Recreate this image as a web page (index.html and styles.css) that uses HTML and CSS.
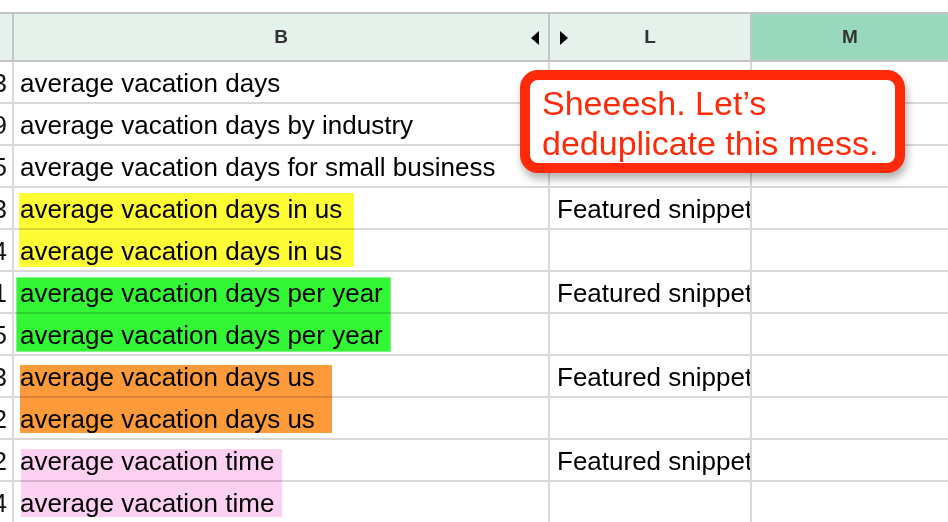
FILE: index.html
```html
<!DOCTYPE html>
<html>
<head>
<meta charset="utf-8">
<link rel="stylesheet" href="styles.css">
</head>
<body>
<div class="sheet">
  <div class="head">
    <div class="hc corner"></div>
    <div class="hc">B<span class="arrow arrow-left"></span></div>
    <div class="hc">L<span class="arrow arrow-right"></span></div>
    <div class="hc sel">M</div>
  </div>
  <div class="grid">
    <div class="row"><div class="num">3</div><div class="cell">average vacation days</div><div class="cell"></div><div class="cell"></div></div>
    <div class="row"><div class="num">9</div><div class="cell">average vacation days by industry</div><div class="cell"></div><div class="cell"></div></div>
    <div class="row"><div class="num">5</div><div class="cell">average vacation days for small business</div><div class="cell"></div><div class="cell"></div></div>
    <div class="row"><div class="num">3</div><div class="cell">average vacation days in us</div><div class="cell">Featured snippet</div><div class="cell"></div></div>
    <div class="row"><div class="num">4</div><div class="cell">average vacation days in us</div><div class="cell"></div><div class="cell"></div></div>
    <div class="row"><div class="num">1</div><div class="cell">average vacation days per year</div><div class="cell">Featured snippet</div><div class="cell"></div></div>
    <div class="row"><div class="num">5</div><div class="cell">average vacation days per year</div><div class="cell"></div><div class="cell"></div></div>
    <div class="row"><div class="num">3</div><div class="cell">average vacation days us</div><div class="cell">Featured snippet</div><div class="cell"></div></div>
    <div class="row"><div class="num">2</div><div class="cell">average vacation days us</div><div class="cell"></div><div class="cell"></div></div>
    <div class="row"><div class="num">2</div><div class="cell">average vacation time</div><div class="cell">Featured snippet</div><div class="cell"></div></div>
    <div class="row"><div class="num">4</div><div class="cell">average vacation time</div><div class="cell"></div><div class="cell"></div></div>

    <div class="mark mark-yellow"></div>
    <div class="mark mark-green"></div>
    <div class="mark mark-orange"></div>
    <div class="mark mark-pink"></div>

    <div class="callout">Sheeesh. Let’s<br>deduplicate this mess.</div>
  </div>
</div>
</body>
</html>
```

FILE: styles.css
```css
html, body {
  margin: 0;
  padding: 0;
  background: #ffffff;
  overflow: hidden;
}

.sheet {
  padding-top: 12px;
  font-family: "Liberation Sans", Arial, sans-serif;
  width: 948px;
}

.head {
  display: grid;
  grid-template-columns: 14px 536px 202px 196px;
  height: 50px;
  border-top: 2px solid #c4c4c4;
  border-bottom: 2px solid #c4c4c4;
  box-sizing: border-box;
}

.hc {
  position: relative;
  background: #e4f2eb;
  border-right: 2px solid #c4c4c4;
  box-sizing: border-box;
  text-align: center;
  font-weight: bold;
  font-size: 19px;
  line-height: 46px;
  color: #333333;
}

.hc.sel {
  background: #9ad8bd;
  border-right: none;
}

.arrow {
  position: absolute;
  top: 17px;
  width: 0;
  height: 0;
  border-top: 7px solid transparent;
  border-bottom: 7px solid transparent;
}

.arrow-left {
  right: 9px;
  border-right: 8px solid #000000;
}

.arrow-right {
  left: 10px;
  border-left: 8px solid #000000;
}

.grid {
  position: relative;
}

.row {
  display: grid;
  grid-template-columns: 14px 536px 202px 196px;
  height: 42px;
}

.num,
.cell {
  border-right: 2px solid #d9d9d9;
  border-bottom: 2px solid #d9d9d9;
  box-sizing: border-box;
  padding-top: 2px;
  font-size: 26px;
  line-height: 38px;
  color: #000000;
  white-space: nowrap;
  overflow: hidden;
}

.num {
  display: flex;
  justify-content: flex-end;
  padding-right: 5px;
  color: #111111;
}

.cell {
  padding-left: 6px;
}

.row .cell:nth-child(3) {
  padding-left: 7px;
}

.row .cell:last-child {
  border-right: none;
}

.mark {
  position: absolute;
  mix-blend-mode: multiply;
  pointer-events: none;
}

.mark-yellow {
  left: 19px;
  top: 131px;
  width: 335px;
  height: 74px;
  background: #fdfc35;
}

.mark-green {
  left: 16px;
  top: 215px;
  width: 375px;
  height: 75px;
  background: #33f734;
  border: 1px solid #86f386;
  box-sizing: border-box;
}

.mark-orange {
  left: 20px;
  top: 303px;
  width: 312px;
  height: 68px;
  background: #fd9a3a;
}

.mark-pink {
  left: 21px;
  top: 387px;
  width: 261px;
  height: 68px;
  background: #fbd0f0;
}

.callout {
  position: absolute;
  left: 520px;
  top: 8px;
  width: 385px;
  height: 103px;
  box-sizing: border-box;
  border: 10px solid #fe2a0a;
  border-radius: 18px;
  background: #ffffff;
  box-shadow: 2px 6px 9px rgba(0, 0, 0, 0.3);
  padding: 3px 0 0 12px;
  font-size: 34px;
  line-height: 40px;
  color: #fe2a0a;
  white-space: nowrap;
}
```
